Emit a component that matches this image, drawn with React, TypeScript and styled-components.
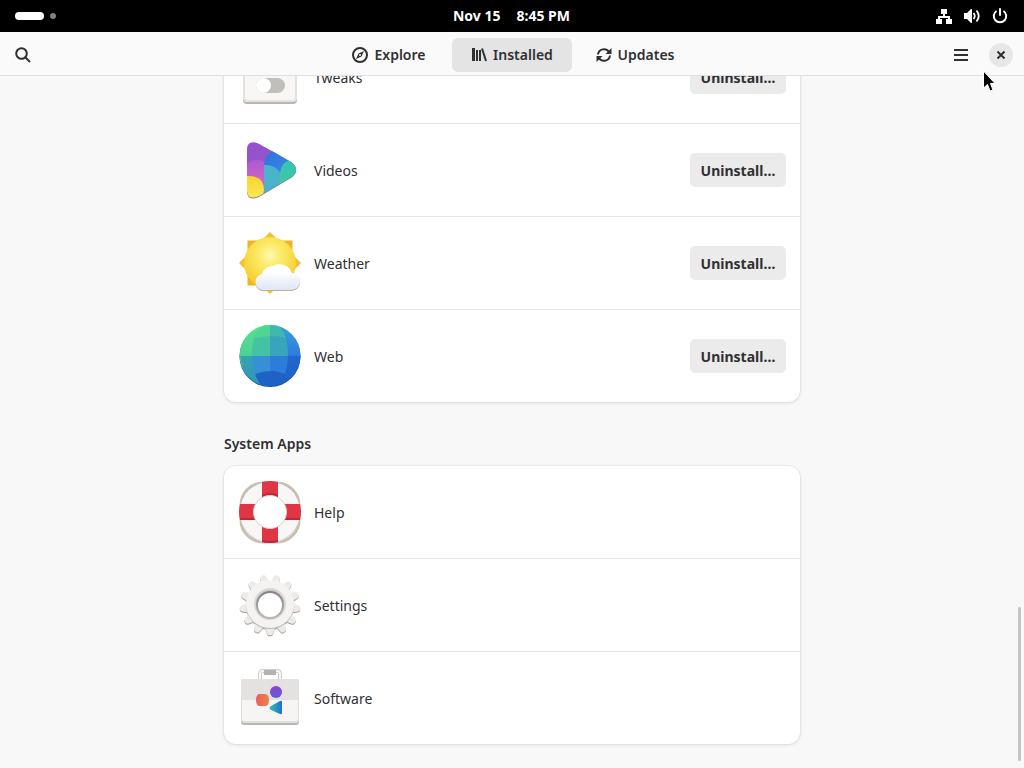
import React from "react";
import styled, { createGlobalStyle } from "styled-components";

const GlobalStyle = createGlobalStyle`
  * { box-sizing: border-box; }
  body {
    margin: 0;
    background: #f8f8f8;
    color: #303033;
    font-family: "Noto Sans", "Open Sans", sans-serif;
    font-size: 14px;
    line-height: 20px;
  }
  button { font: inherit; color: inherit; border: 0; padding: 0; background: none; }
`;

const Desktop = styled.div`
  position: relative;
  display: flex;
  flex-direction: column;
  height: 100vh;
  overflow: hidden;
`;

const TopBar = styled.header`
  flex: none;
  display: grid;
  grid-template-columns: 1fr auto 1fr;
  align-items: center;
  height: 32px;
  padding: 0 16px 0 15px;
  background: #000;
  color: #fff;
`;

const Workspaces = styled.button`
  display: flex;
  align-items: center;
  justify-self: start;
  gap: 6px;
`;

const WorkspaceDot = styled.span<{ $active?: boolean }>`
  width: ${(p) => (p.$active ? 29 : 6)}px;
  height: ${(p) => (p.$active ? 8 : 6)}px;
  border-radius: 4px;
  background: ${(p) => (p.$active ? "#fff" : "#808080")};
`;

const Clock = styled.button`
  display: flex;
  gap: 16px;
  font-weight: 700;
`;

const StatusArea = styled.button`
  display: flex;
  justify-self: end;
  gap: 12px;
`;

const HeaderBar = styled.nav`
  flex: none;
  display: grid;
  grid-template-columns: 1fr auto 1fr;
  align-items: center;
  height: 44px;
  padding: 3px 6px 0;
  background: #fafafa;
  border-bottom: 1px solid #e0e0e0;
`;

const HeaderEnd = styled.div`
  display: flex;
  justify-self: end;
  gap: 6px;
`;

const IconButton = styled.button`
  display: flex;
  align-items: center;
  justify-content: center;
  width: 34px;
  height: 34px;
`;

const CloseDisc = styled.span`
  display: flex;
  align-items: center;
  justify-content: center;
  width: 24px;
  height: 24px;
  border-radius: 50%;
  background: #e7e7e7;
`;

const Tabs = styled.div`
  display: flex;
  gap: 3px;
`;

const Tab = styled.button<{ $active?: boolean }>`
  display: flex;
  align-items: center;
  justify-content: center;
  gap: 6px;
  width: 120px;
  height: 34px;
  border-radius: 6px;
  font-weight: 600;
  background: ${(p) => (p.$active ? "#e4e4e4" : "transparent")};
`;

const Scroller = styled.main`
  flex: 1;
  min-height: 0;
  display: flex;
  flex-direction: column-reverse;
  overflow-y: auto;
  scrollbar-width: none;
`;

const Page = styled.div`
  width: 100%;
  max-width: 600px;
  margin: 0 auto;
  padding: 24px 12px;
`;

const SectionTitle = styled.h2`
  margin: 0;
  padding: 32px 0 12px;
  font-size: 14px;
  line-height: 20px;
  font-weight: 600;
`;

const Card = styled.ul`
  margin: 0;
  padding: 0;
  list-style: none;
  border-radius: 12px;
  background: #fff;
  box-shadow: 0 0 0 1px rgba(0, 0, 0, 0.03), 0 1px 3px 1px rgba(0, 0, 0, 0.07);
`;

const Row = styled.li`
  display: flex;
  align-items: center;
  gap: 12px;
  padding: 14px;
  & + & { border-top: 1px solid #e6e6e6; }
`;

const AppName = styled.span`
  flex: 1;
  padding-top: 2px;
`;

const UninstallButton = styled.button`
  width: 96px;
  height: 34px;
  padding-top: 1px;
  border-radius: 5px;
  background: #ebebeb;
  font-weight: 700;
`;

const ScrollThumb = styled.div`
  position: absolute;
  right: 3px;
  bottom: 7px;
  width: 3px;
  height: 20%;
  border-radius: 2px;
  background: #c4c4c4;
`;

const Pointer = styled.svg`
  position: absolute;
  top: 70px;
  right: 28px;
`;

const AppSvg = ({ children }: { children: React.ReactNode }) => (
  <svg width="64" height="64" viewBox="0 0 64 64" aria-hidden="true">{children}</svg>
);

const Symbolic = ({ children }: { children: React.ReactNode }) => (
  <svg width="16" height="16" viewBox="0 0 16 16" fill="none" stroke="currentColor" strokeWidth="2" aria-hidden="true">{children}</svg>
);

const TweaksIcon = () => (
  <AppSvg>
    <rect x="5" y="7" width="54" height="52" rx="4" fill="#b9b5b1" />
    <rect x="5" y="5" width="54" height="52" rx="4" fill="#e3e2df" />
    <rect x="7" y="6" width="50" height="49" rx="3" fill="#f8f7f6" />
    <rect x="18" y="33" width="29" height="15" rx="7.500" fill="#c0bfbc" />
    <circle cx="25.500" cy="40.500" r="7.500" fill="#fff" />
  </AppSvg>
);

const VideosIcon = () => (
  <AppSvg>
    <defs>
      <clipPath id="play"><path d="M9 12Q9 2 19 5Q22 6 53 24Q63 32 53 39L21 58Q9 63 9 52Z" /></clipPath>
      <linearGradient id="pink" x1="0" y1="0" x2="0" y2="1"><stop stopColor="#a85bd0" /><stop offset="0.5" stopColor="#cf62c6" /></linearGradient>
      <linearGradient id="azure" x1="0" y1="0" x2="1" y2="1"><stop stopColor="#2e6fdd" /><stop offset="1" stopColor="#3d96e8" /></linearGradient>
      <linearGradient id="teal" x1="0" y1="1" x2="1" y2="0"><stop stopColor="#4fb0cf" /><stop offset="1" stopColor="#45b7c4" /></linearGradient>
      <linearGradient id="mint" x1="0" y1="0" x2="0" y2="1"><stop stopColor="#34c5b0" /><stop offset="1" stopColor="#45c8a0" /></linearGradient>
      <linearGradient id="yolk" x1="0" y1="0" x2="0" y2="1"><stop stopColor="#f8d52c" /><stop offset="1" stopColor="#f9ec5c" /></linearGradient>
    </defs>
    <path d="M9 13Q9 4 20 7L53 26Q63 33 53 40L21 59Q9 64 9 53Z" fill="#6f9a80" />
    <g clipPath="url(#play)">
      <rect width="64" height="64" fill="#9453cc" />
      <path d="M8 26Q18 18 27 24V64H8Z" fill="url(#pink)" />
      <path d="M26 27Q27 16 36 12L64 28V44H26Z" fill="url(#azure)" />
      <path d="M26 27Q37 26 43 36L64 40V64H26Z" fill="url(#teal)" />
      <path d="M42 36Q43 23 54 22L64 26V42L38 58Q42 48 42 36Z" fill="url(#mint)" />
      <path d="M8 38Q26 37 26 52L24 64H8Z" fill="url(#yolk)" />
    </g>
  </AppSvg>
);

const WeatherIcon = () => (
  <AppSvg>
    <defs>
      <radialGradient id="sun" cx="0.5" cy="0.35" r="0.65"><stop stopColor="#fffab0" /><stop offset="0.35" stopColor="#fbea68" /><stop offset="1" stopColor="#f6cb26" /></radialGradient>
      <linearGradient id="cloud" x1="0" y1="0" x2="0" y2="1"><stop offset="0.3" stopColor="#fff" /><stop offset="1" stopColor="#dce6f5" /></linearGradient>
    </defs>
    <rect x="9.500" y="9.500" width="45" height="45" fill="#f0b323" />
    <path d="M32 1L63 32L32 63L1 32Z" fill="#f3c02c" />
    <circle cx="32" cy="32" r="26" fill="url(#sun)" />
    <path d="M27 60A8 8 0 0 1 24 44A11 11 0 0 1 35 36Q40 33 46 35Q52 37 54 43A8.500 8.500 0 0 1 53 60Z" fill="#b8b38e" />
    <path d="M27 59A8 8 0 0 1 24 43A11 11 0 0 1 35 35Q40 32 46 34Q52 36 54 42A8.500 8.500 0 0 1 53 59Z" fill="url(#cloud)" />
  </AppSvg>
);

const WebIcon = () => (
  <AppSvg>
    <defs>
      <clipPath id="globe"><circle cx="32" cy="31.500" r="30.500" /></clipPath>
      <linearGradient id="west" x1="0" y1="0" x2="0" y2="1"><stop stopColor="#57e389" /><stop offset="0.5" stopColor="#4cd098" /><stop offset="1" stopColor="#2f80d0" /></linearGradient>
      <linearGradient id="east" x1="0" y1="0" x2="0" y2="1"><stop stopColor="#3aa0d8" /><stop offset="0.45" stopColor="#2f7fe0" /><stop offset="1" stopColor="#1a5cb8" /></linearGradient>
    </defs>
    <circle cx="32" cy="32.500" r="30.500" fill="#1a5094" />
    <g clipPath="url(#globe)">
      <rect width="32" height="64" fill="url(#west)" />
      <rect x="32" width="32" height="64" fill="url(#east)" />
      <path d="M16 14Q24 12 32 12V32H14Q14 22 16 14Z" fill="#43c3a3" />
      <path d="M32 12Q40 12 48 14Q50 22 50 32H32Z" fill="#38a5bd" />
      <path d="M14 32H32V47Q24 47 17 50Q14 42 14 32Z" fill="#3590d6" />
      <path d="M32 32H50Q50 42 47 50Q40 47 32 47Z" fill="#2c7cdc" />
      <path d="M16 14Q20 4 28 0H32V12Q24 12 16 14Z" fill="#4fd494" />
      <path d="M32 0H38Q45 5 48 14Q40 12 32 12Z" fill="#3fb9ac" />
      <path d="M17 50Q32 44 47 50Q44 60 38 64H26Q20 60 17 50Z" fill="#1e62c6" />
      <path d="M50 32H64V64H40Q50 50 50 32Z" fill="#1d63c8" fillOpacity="0.8" />
      <path d="M2 32H14Q14 48 22 60L8 56Z" fill="#3199b4" fillOpacity="0.8" />
    </g>
  </AppSvg>
);

const HelpIcon = () => (
  <AppSvg>
    <rect x="3" y="3" width="58" height="59" rx="22" fill="#fcfbfa" stroke="#c8bfb4" strokeWidth="3" />
    <circle cx="32" cy="33" r="23" fill="none" stroke="#d2ccc5" strokeWidth="14" />
    <circle cx="32" cy="32" r="23" fill="none" stroke="#f8f7f6" strokeWidth="14" />
    <path d="M24 2Q32 0 40 2V18Q32 14 24 18ZM24 46Q32 50 40 46V62Q32 64 24 62ZM2 24Q0 32 2 40H18Q14 32 18 24ZM62 24Q64 32 62 40H46Q50 32 46 24Z" fill="#e03545" />
    <path d="M24 18Q32 14 40 18V15Q32 11 24 15ZM2 38H17L18 40H2ZM47 38H62V40H46ZM24 60Q32 62 40 60V62Q32 64 24 62Z" fill="#bf2637" />
    <circle cx="32" cy="32" r="16.500" fill="#fff" stroke="#d8d0c8" strokeWidth="1" />
  </AppSvg>
);

const SettingsIcon = () => (
  <AppSvg>
    <defs>
      <linearGradient id="bevel" x1="0" y1="0" x2="0" y2="1"><stop stopColor="#858388" /><stop offset="1" stopColor="#b8b6b3" /></linearGradient>
    </defs>
    {[{ y: 1, fill: "#9f9d9a" }, { y: 0, fill: "#ecebe9" }].map((layer) => (
      <g key={layer.y} transform={`translate(0 ${layer.y})`} fill={layer.fill}>
        {Array.from({ length: 13 }, (_, i) => (
          <path key={i} d="M27 53L29 60.500Q29.500 62.500 32 62.500Q34.500 62.500 35 60.500L37 53Z" transform={`rotate(${(i * 360) / 13} 32 32)`} />
        ))}
        <circle cx="32" cy="32" r="24" />
      </g>
    ))}
    <circle cx="32" cy="32" r="24" fill="#b9b7b4" />
    <circle cx="32" cy="31" r="24" fill="#f4f3f2" />
    <circle cx="32" cy="31" r="15" fill="#c6c4c1" stroke="#d9d7d4" strokeWidth="2" />
    <circle cx="32" cy="32" r="13" fill="#fff" stroke="url(#bevel)" strokeWidth="2" />
  </AppSvg>
);

const SoftwareIcon = () => (
  <AppSvg>
    <defs>
      <linearGradient id="orange"><stop stopColor="#e8605e" /><stop offset="1" stopColor="#f08048" /></linearGradient>
      <linearGradient id="violet" x1="0" y1="0" x2="0" y2="1"><stop stopColor="#9141cc" /><stop offset="1" stopColor="#5d5be0" /></linearGradient>
      <linearGradient id="blue"><stop stopColor="#35c0a4" /><stop offset="1" stopColor="#1c6fd8" /></linearGradient>
    </defs>
    <path d="M22 14V8Q22 5 25 5H39Q42 5 42 8V14" fill="none" stroke="#d0cecb" strokeWidth="4" />
    <path d="M22 14V8Q22 5 25 5H39Q42 5 42 8V14" fill="none" stroke="#f6f5f4" strokeWidth="2" />
    <rect x="26" y="4" width="12" height="5" fill="#b5b3b0" />
    <rect x="3" y="14" width="58" height="45" rx="3" fill="#b9b7b4" />
    <rect x="3" y="13" width="58" height="44" rx="3" fill="#deddda" />
    <rect x="4" y="13" width="56" height="42" rx="2" fill="#f6f5f4" />
    <rect x="3" y="13" width="58" height="21" rx="1" fill="#e3e2e0" />
    <path d="M21 28H27Q31 28 31 34Q31 40 27 40H21Q18 39 18 34Q18 29 21 28Z" fill="url(#orange)" />
    <circle cx="38" cy="26" r="6" fill="url(#violet)" />
    <path d="M33 40L42 35Q44 34 44 36V47Q44 49 42 48L33 44Q30 42 33 40Z" fill="url(#blue)" />
  </AppSvg>
);

const SearchIcon = () => (
  <Symbolic><circle cx="6.500" cy="6.500" r="5.300" /><path d="M10.500 10.500L15 15" /></Symbolic>
);

const CompassIcon = () => (
  <Symbolic>
    <circle cx="8" cy="8" r="7" />
    <path d="M12 4L9.500 9.500L4 12L6.500 6.500Z" fill="currentColor" stroke="none" />
    <circle cx="8" cy="8" r="1" fill="#fafafa" stroke="none" />
  </Symbolic>
);

const LibraryIcon = () => (
  <Symbolic>
    <path d="M1 1H4V14H1ZM5 3H7V14H5ZM8 3H10V14H8Z" fill="currentColor" stroke="none" />
    <path d="M11 1.500L15 14" />
  </Symbolic>
);

const UpdateIcon = () => (
  <Symbolic>
    <path d="M2 7.500A6 6 0 0 1 13 5M14 8.500A6 6 0 0 1 3 11" />
    <path d="M15.500 1V7H9.500ZM.500 15V9H6.500Z" fill="currentColor" stroke="none" />
  </Symbolic>
);

const NetworkIcon = () => (
  <Symbolic>
    <path d="M5 1H11V6H5ZM0 11H6V16H0ZM10 11H16V16H10Z" fill="currentColor" stroke="none" />
    <path d="M8 5V9M3 12V9H13V12" />
  </Symbolic>
);

const VolumeIcon = () => (
  <Symbolic>
    <path d="M0 5H3L7 1H8V15H7L3 11H0Z" fill="currentColor" stroke="none" />
    <path d="M9.500 5Q12 8 9.500 11M12.500 2.500Q17 8 12.500 13.500" strokeWidth="1.800" />
  </Symbolic>
);

const PowerIcon = () => (
  <Symbolic>
    <path d="M4.500 3A6.200 6.200 0 1 0 11.500 3" />
    <path d="M8 1V7" strokeLinecap="round" />
  </Symbolic>
);

const MenuIcon = () => <Symbolic><path d="M1 3H15M1 8H15M1 13H15" /></Symbolic>;

const CloseIcon = () => <Symbolic><path d="M4.500 4.500L11.500 11.500M11.500 4.500L4.500 11.500" /></Symbolic>;

type AppEntry = { name: string; Icon: React.ComponentType; removable?: boolean };

const installed: AppEntry[] = [
  { name: "Tweaks", Icon: TweaksIcon, removable: true },
  { name: "Videos", Icon: VideosIcon, removable: true },
  { name: "Weather", Icon: WeatherIcon, removable: true },
  { name: "Web", Icon: WebIcon, removable: true },
];

const system: AppEntry[] = [
  { name: "Help", Icon: HelpIcon },
  { name: "Settings", Icon: SettingsIcon },
  { name: "Software", Icon: SoftwareIcon },
];

const AppList = ({ apps }: { apps: AppEntry[] }) => (
  <Card>
    {apps.map(({ name, Icon, removable }) => (
      <Row key={name}>
        <Icon />
        <AppName>{name}</AppName>
        {removable && <UninstallButton>Uninstall…</UninstallButton>}
      </Row>
    ))}
  </Card>
);

export default function App() {
  return (
    <Desktop>
      <GlobalStyle />
      <TopBar>
        <Workspaces aria-label="Activities"><WorkspaceDot $active /><WorkspaceDot /></Workspaces>
        <Clock><span>Nov 15</span><span>8:45 PM</span></Clock>
        <StatusArea aria-label="System"><NetworkIcon /><VolumeIcon /><PowerIcon /></StatusArea>
      </TopBar>
      <HeaderBar>
        <IconButton aria-label="Search"><SearchIcon /></IconButton>
        <Tabs>
          <Tab><CompassIcon />Explore</Tab>
          <Tab $active><LibraryIcon />Installed</Tab>
          <Tab><UpdateIcon />Updates</Tab>
        </Tabs>
        <HeaderEnd>
          <IconButton aria-label="Main menu"><MenuIcon /></IconButton>
          <IconButton aria-label="Close"><CloseDisc><CloseIcon /></CloseDisc></IconButton>
        </HeaderEnd>
      </HeaderBar>
      <Scroller>
        <Page>
          <AppList apps={installed} />
          <SectionTitle>System Apps</SectionTitle>
          <AppList apps={system} />
        </Page>
      </Scroller>
      <ScrollThumb />
      <Pointer width="14" height="22" viewBox="0 0 14 22" aria-hidden="true">
        <path d="M1.500 1V18L5.500 14.500L8 21L11 20L8.500 13.500H13Z" fill="#000" stroke="#fff" />
      </Pointer>
    </Desktop>
  );
}
